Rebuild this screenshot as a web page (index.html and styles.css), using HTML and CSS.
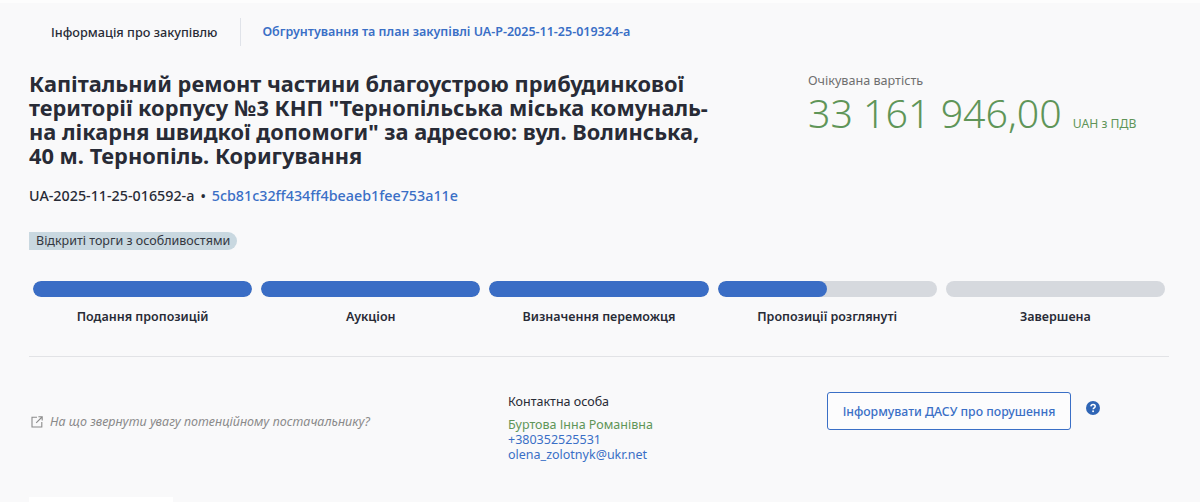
FILE: index.html
```html
<!DOCTYPE html>
<html lang="uk">
<head>
<meta charset="utf-8">
<title>Інформація про закупівлю</title>
<link rel="stylesheet" href="styles.css">
</head>
<body>
<main class="page">
  <nav class="tabs">
    <span class="tab tab-active">Інформація про закупівлю</span>
    <a class="tab tab-link">Обгрунтування та план закупівлі UA-P-2025-11-25-019324-a</a>
  </nav>
  <section class="head">
    <div class="head-main">
      <h1 class="title">Капітальний ремонт частини благоустрою прибудинкової<br>території корпусу №3 КНП "Тернопільська міська комуналь-<br>на лікарня швидкої допомоги" за адресою: вул. Волинська,<br>40 м. Тернопіль. Коригування</h1>
      <p class="ids"><span>UA-2025-11-25-016592-a</span><span class="dot">•</span><a class="hash">5cb81c32ff434ff4beaeb1fee753a11e</a></p>
      <span class="badge">Відкриті торги з особливостями</span>
    </div>
    <div class="price">
      <div class="price-label">Очікувана вартість</div>
      <div class="price-row"><span class="amount">33 161 946,00</span><span class="currency">UAH з ПДВ</span></div>
    </div>
  </section>
  <section class="steps">
    <div class="step"><div class="bar"><div class="fill fill-full"></div></div><div class="step-name">Подання пропозицій</div></div>
    <div class="step"><div class="bar"><div class="fill fill-full"></div></div><div class="step-name">Аукціон</div></div>
    <div class="step"><div class="bar"><div class="fill fill-full"></div></div><div class="step-name">Визначення переможця</div></div>
    <div class="step"><div class="bar"><div class="fill fill-half"></div></div><div class="step-name">Пропозиції розглянуті</div></div>
    <div class="step"><div class="bar"></div><div class="step-name">Завершена</div></div>
  </section>
  <section class="info">
    <a class="hint">
      <svg class="hint-icon" width="12" height="12" viewBox="0 0 12 12" fill="none" stroke="#8a8a8a" stroke-width="1.1"><path d="M6 1.2H1v9.8h9.8V6"/><path d="M5.2 6.8 11 1M7.4 .8H11.2V4.6"/></svg>
      <span>На що звернути увагу потенційному постачальнику?</span>
    </a>
    <div class="contact">
      <div class="contact-title">Контактна особа</div>
      <div class="contact-name">Буртова Інна Романівна</div>
      <div class="contact-line">+380352525531</div>
      <div class="contact-line">olena_zolotnyk@ukr.net</div>
    </div>
    <div class="report">
      <button class="report-btn">Інформувати ДАСУ про порушення</button>
      <svg class="help" width="14" height="14" viewBox="0 0 14 14"><circle cx="7" cy="7" r="7" fill="#2f65b5"/><path d="M4.9 5.4C5 4.1 5.9 3.4 7.1 3.4c1.3 0 2.1.8 2.1 1.8 0 1.7-2 1.6-2 3.1" fill="none" stroke="#fff" stroke-width="1.5"/><circle cx="7.1" cy="10.3" r=".95" fill="#fff"/></svg>
    </div>
  </section>
  <div class="next-card"></div>
</main>
</body>
</html>
```
FILE: styles.css
```css
* { box-sizing: border-box; }
html, body { margin: 0; height: 502px; overflow: hidden; background: #f9f9fa; }
body { font-family: "Noto Sans", "Open Sans", sans-serif; color: #282b36; }
.page { height: 502px; padding: 18px 31px 0 29px; border-top: 3px solid #fdfdfd; overflow: hidden; }

.tabs { display: flex; align-items: center; height: 28px; margin-top: -3px; }
.tab { font-size: 12.7px; font-weight: 500; line-height: 28px; }
.tab-active { padding: 0 23px 0 22px; border-right: 1px solid #e0e3e9; color: #282b36; }
.tab-link { padding-left: 21px; color: #3a6fc6; font-size: 12.5px; font-weight: 600; }

.head { display: flex; margin-top: 26px; }
.head-main { width: 779px; }
.title { margin: 0; font-size: 21.8px; font-weight: 700; line-height: 24px; color: #282b36; white-space: nowrap; }
.ids { display: flex; margin: 18px 0 0; font-size: 14.3px; line-height: 20px; font-weight: 500; }
.dot { margin: 0 6px; }
.hash { color: #3a6fc6; font-weight: 500; }
.badge { display: inline-block; margin-top: 26px; padding: 0 7px; background: #c9d8e0; border-radius: 0 9px 9px 0; font-size: 12.5px; line-height: 18px; color: #33373f; }

.price { margin-top: 0; }
.price-label { font-size: 12.6px; line-height: 18px; color: #6f6f6f; }
.price-row { display: flex; align-items: baseline; margin-top: 1px; color: #5f9558; }
.amount { font-size: 39.3px; line-height: 44px; font-weight: 300; }
.currency { margin-left: 11px; font-size: 12.2px; }

.steps { display: grid; grid-template-columns: repeat(5, 1fr); column-gap: 9px; margin: 31px 4px 0; }
.bar { height: 16px; background: #d6d9de; border-radius: 8px; overflow: hidden; }
.fill { height: 100%; background: #3a6dc5; border-radius: 8px; }
.fill-full { width: 100%; }
.fill-half { width: 50%; }
.step-name { margin-top: 10px; font-size: 12.5px; line-height: 20px; font-weight: 600; text-align: center; }

.info { display: flex; align-items: flex-start; margin-top: 29px; padding-top: 35px; border-top: 1px solid #e2e3e6; }
.hint { display: flex; align-items: center; gap: 7px; width: 479px; margin-top: 22px; font-size: 12.5px; font-style: italic; color: #8a8a8a; line-height: 16px; }
.hint-icon { flex: none; margin-left: 2px; }
.contact { width: 319px; font-size: 12.5px; line-height: 14.5px; color: #3a6fc6; }
.contact-title { margin-top: 2px; color: #282b36; line-height: 16px; }
.contact-name { margin-top: 7px; color: #5f9558; line-height: 16px; }
.report { display: flex; align-items: flex-start; gap: 15px; }
.report-btn { width: 244px; height: 38px; padding: 0; background: #fcfcfd; border: 1px solid #3a6fc6; border-radius: 3px; color: #3a6fc6; font: 500 12.25px "Noto Sans", sans-serif; }
.help { margin-top: 9px; }
.next-card { width: 144px; height: 20px; margin-top: 35px; background: #fff; }
```
